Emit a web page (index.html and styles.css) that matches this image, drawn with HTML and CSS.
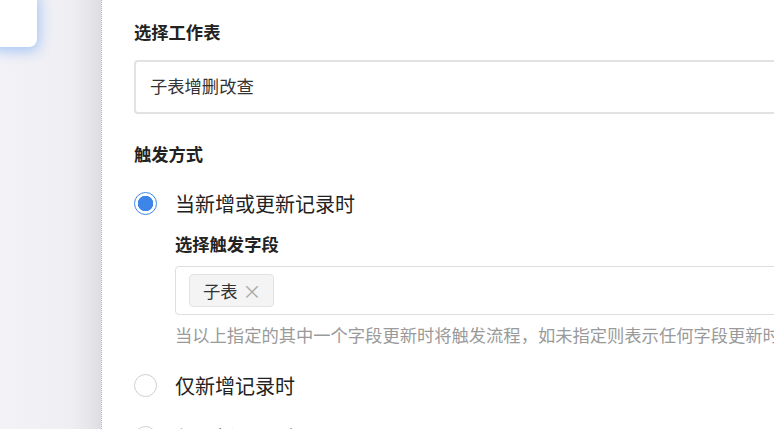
FILE: index.html
```html
<!DOCTYPE html>
<html lang="zh-CN">
<head>
    <meta charset="UTF-8">
    <meta name="viewport" content="width=device-width, initial-scale=1.0">
    <title>触发设置</title>
    <link rel="stylesheet" href="styles.css">
</head>
<body>
    <div class="layout">
        <aside class="sidebar">
            <div class="node-card"></div>
        </aside>

        <main class="panel">
            <div class="field-label">选择工作表</div>
            <div class="select-box">子表增删改查</div>

            <div class="field-label section">触发方式</div>

            <div class="option checked">
                <span class="radio"></span>
                <span class="option-text">当新增或更新记录时</span>
            </div>
            <div class="sub-block">
                <div class="field-label">选择触发字段</div>
                <div class="tag-box">
                    <span class="tag">子表 <span class="tag-close">×</span></span>
                </div>
                <p class="hint">当以上指定的其中一个字段更新时将触发流程，如未指定则表示任何字段更新时都将触发流程</p>
            </div>

            <div class="option">
                <span class="radio"></span>
                <span class="option-text">仅新增记录时</span>
            </div>
            <div class="option">
                <span class="radio"></span>
                <span class="option-text">仅更新记录时</span>
            </div>
        </main>
    </div>
</body>
</html>
```

FILE: styles.css
```css
:root {
    --blue: #3d86e8;
    --text: #222;
    --muted: #9a9a9a;
    --line: #dedede;
}

* {
    margin: 0;
    padding: 0;
    box-sizing: border-box;
    font-family: "Noto Sans CJK SC", "Liberation Sans", sans-serif;
}

body {
    width: 774px;
    height: 429px;
    overflow: hidden;
    background: #fff;
    color: var(--text);
}

.layout {
    display: flex;
    height: 429px;
}

.sidebar {
    flex: 0 0 102px;
    background: linear-gradient(90deg, #f3f3f7 0%, #efeff3 70%, #e6e6ea 88%, #dedee2 100%);
    border-right: 1px dotted #b8b8b8;
    overflow: hidden;
}

.node-card {
    width: 47px;
    height: 57px;
    margin: -10px 0 0 -10px;
    background: #fff;
    border-radius: 8px;
    box-shadow: 2px 4px 14px rgba(70, 140, 245, 0.45);
}

.panel {
    flex: 0 0 720px;
    padding: 19px 0 0 32px;
}

.field-label {
    font-size: 17.3px;
    font-weight: 700;
    line-height: 26px;
    color: var(--text);
}

.field-label.section {
    margin-top: 27px;
}

.select-box {
    margin-top: 15px;
    height: 54px;
    border: 2px solid #e2e2e2;
    border-radius: 4px;
    padding: 0 0 3px 14px;
    display: flex;
    align-items: center;
    font-size: 17.3px;
    color: #333;
}

.option {
    display: flex;
    align-items: center;
    height: 32px;
    margin-top: 20px;
}

.sub-block + .option {
    margin-top: 22px;
}

.radio {
    width: 23px;
    height: 23px;
    border: 1px solid #cfcfcf;
    border-radius: 50%;
    margin-right: 18px;
    flex: none;
}

.option.checked .radio {
    border-color: var(--blue);
    background: radial-gradient(circle, var(--blue) 0 7.5px, #fff 8px);
}

.option-text {
    font-size: 20px;
    color: var(--text);
}

.sub-block {
    padding-left: 41px;
    margin-top: 12px;
}

.tag-box {
    margin-top: 9px;
    height: 49px;
    border: 1px solid var(--line);
    border-radius: 4px;
    padding: 7px 13px;
    display: flex;
    align-items: center;
}

.tag {
    display: inline-flex;
    align-items: center;
    height: 33px;
    padding: 0 11px 0 13px;
    background: #f4f4f4;
    border: 1px solid #e2e2e2;
    border-radius: 4px;
    font-size: 17.3px;
    color: #333;
}

.tag-close {
    margin-left: 5px;
    font-size: 19px;
    color: #aaa;
}

.hint {
    margin-top: 8px;
    font-size: 17.3px;
    line-height: 24px;
    color: var(--muted);
    white-space: nowrap;
}
```
